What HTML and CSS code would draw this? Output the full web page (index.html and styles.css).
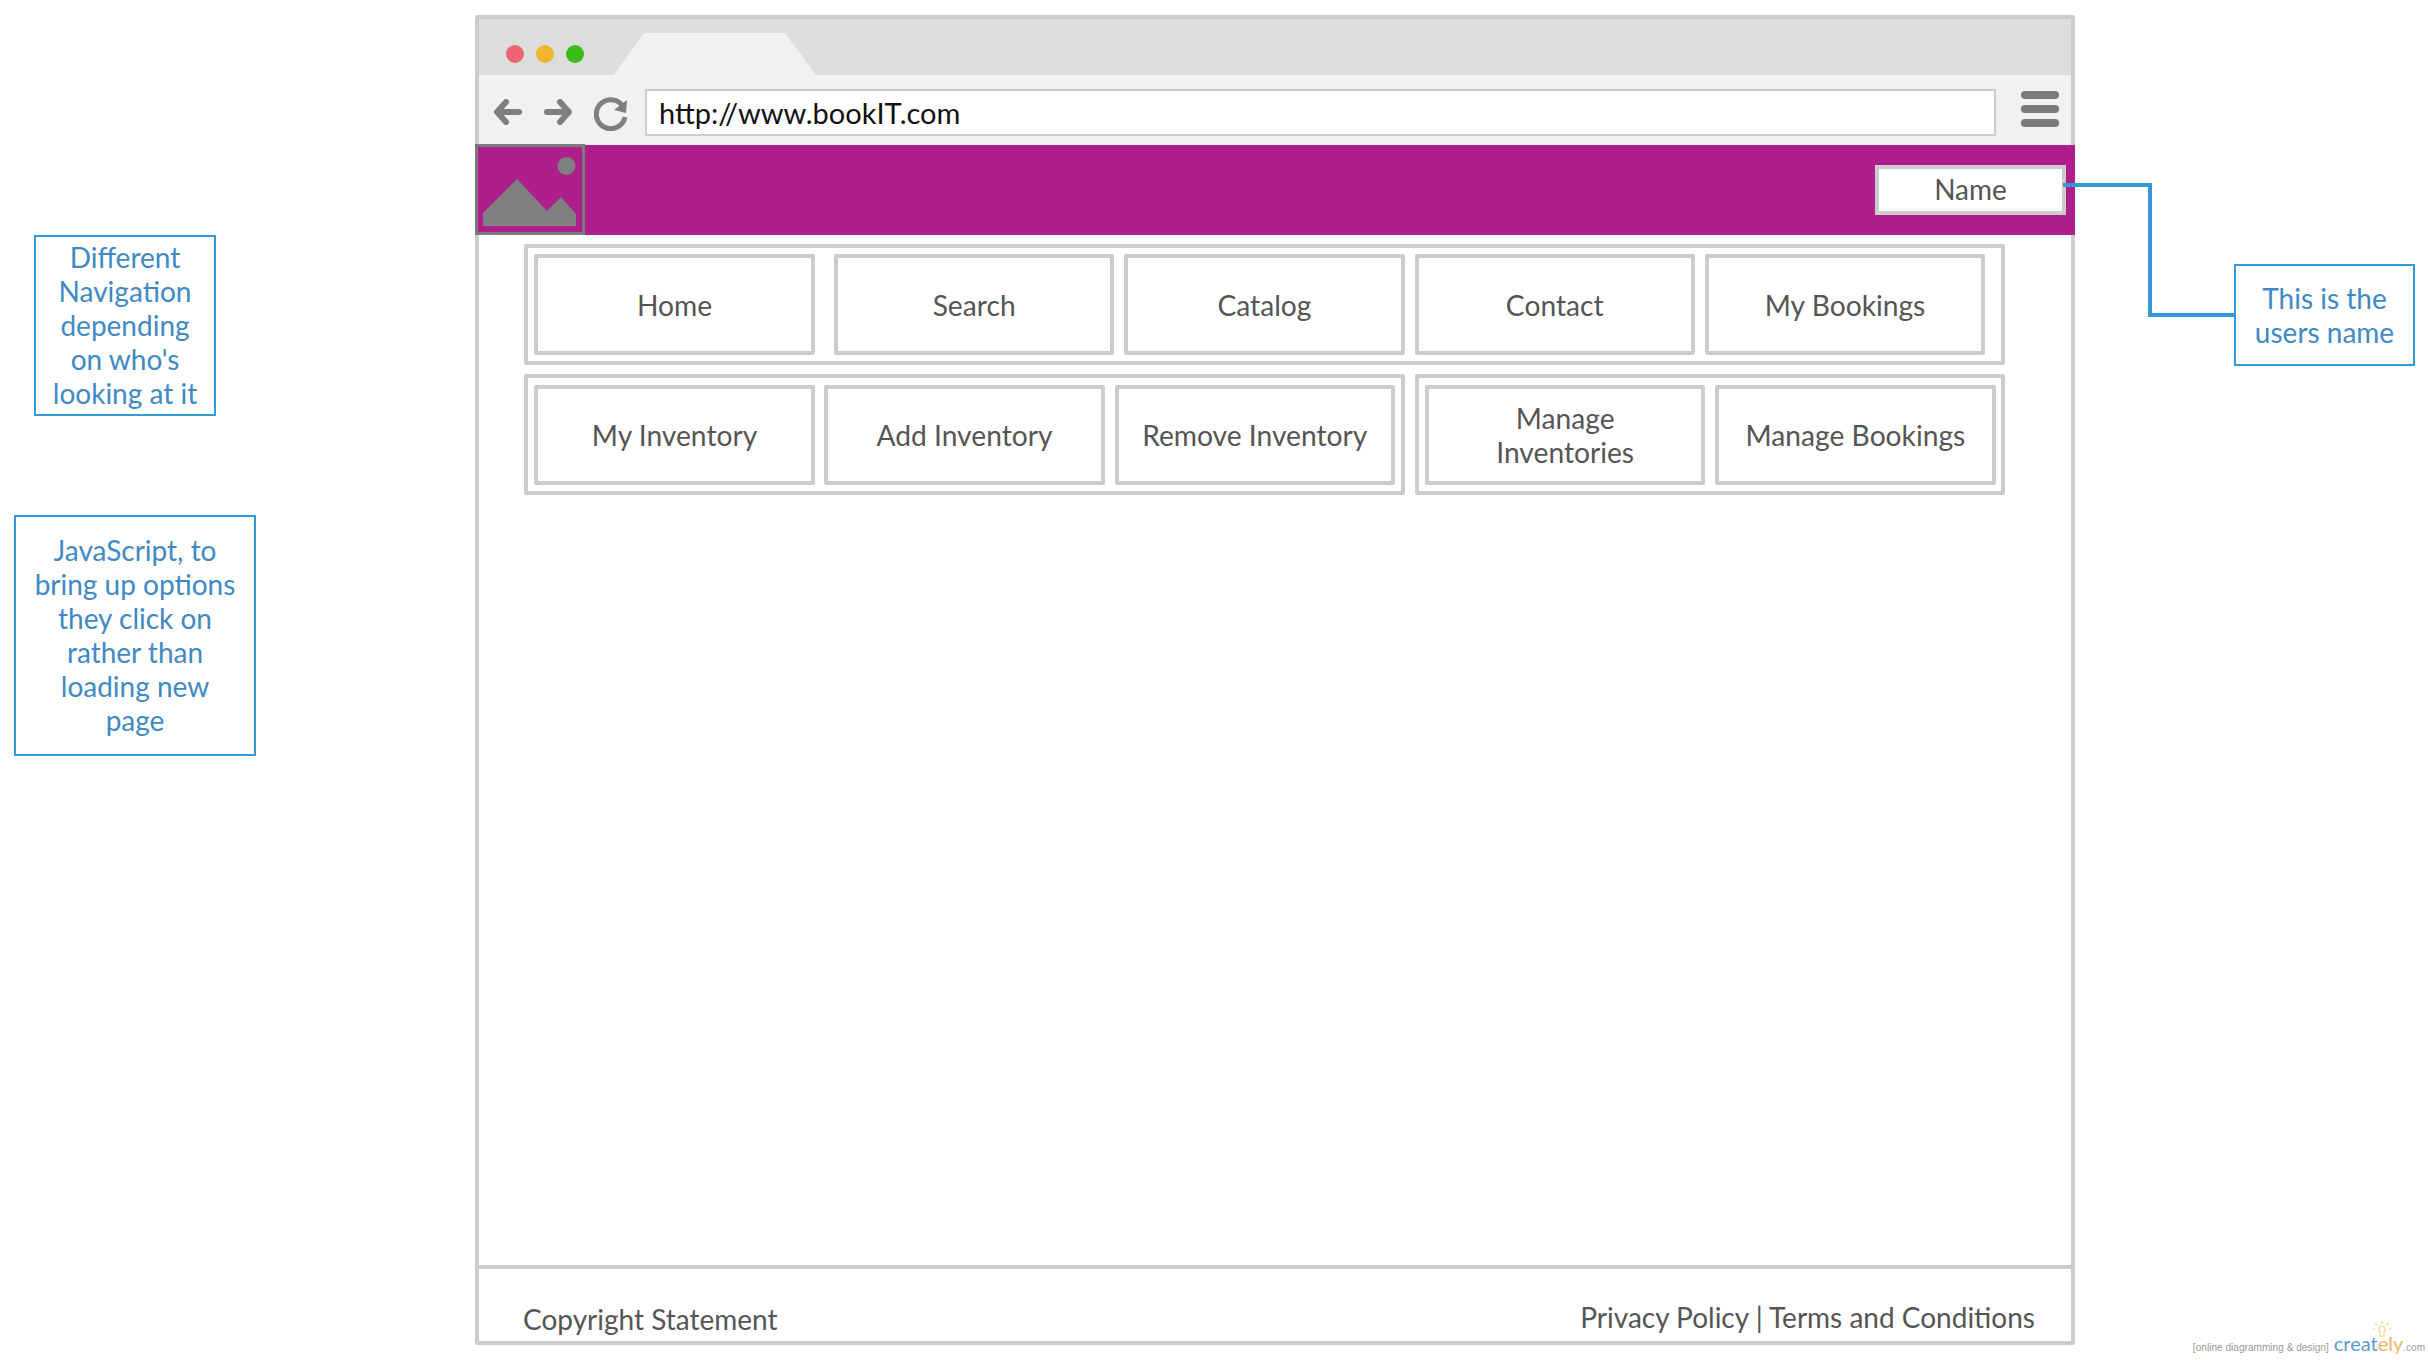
FILE: index.html
```html
<!DOCTYPE html>
<html lang="en">
<head>
  <meta charset="UTF-8" />
  <title>bookIT wireframe</title>
  <link rel="stylesheet" href="styles.css">
</head>
<body>

  <!-- Notes on the left of the diagram -->
  <div class="note note-nav">Different Navigation depending on who's looking at it</div>
  <div class="note note-js">JavaScript, to bring up options they click on rather than loading new page</div>

  <!-- Browser window -->
  <div class="window">
    <div class="tabbar">
      <span class="dot dot-red"></span>
      <span class="dot dot-yellow"></span>
      <span class="dot dot-green"></span>
      <div class="tab"></div>
    </div>

    <div class="toolbar">
      <svg class="icon-arrow" viewBox="0 0 28 26">
        <path d="M12 3 3 13l9 10M4 13h21" fill="none" stroke="#7f7f7f" stroke-width="6" stroke-linecap="round" stroke-linejoin="round"/>
      </svg>
      <svg class="icon-arrow" viewBox="0 0 28 26">
        <path d="M16 3l9 10-9 10M24 13H3" fill="none" stroke="#7f7f7f" stroke-width="6" stroke-linecap="round" stroke-linejoin="round"/>
      </svg>
      <svg class="icon-reload" viewBox="0 0 34 34">
        <path d="M28 8A14.500 14.500 0 1 0 31 20" fill="none" stroke="#7f7f7f" stroke-width="5"/>
        <path d="M33 3 32 16 20 13z" fill="#7f7f7f"/>
      </svg>
      <div class="address">http://www.bookIT.com</div>
      <div class="menu">
        <span></span>
        <span></span>
        <span></span>
      </div>
    </div>

    <header class="header">
      <div class="logo">
        <svg class="logo-img" viewBox="0 0 104 85">
          <circle cx="88.500" cy="19" r="9" fill="#7f7f7f"/>
          <path d="M5 66 39 32 69 64 83 50 98 67V79H5z" fill="#7f7f7f"/>
        </svg>
      </div>
      <div class="name-box">Name</div>
    </header>

    <main class="content">
      <div class="nav-row">
        <a class="nav-item nav-item-first">Home</a>
        <a class="nav-item">Search</a>
        <a class="nav-item">Catalog</a>
        <a class="nav-item">Contact</a>
        <a class="nav-item">My Bookings</a>
      </div>
      <div class="nav-groups">
        <div class="nav-group nav-group-inventory">
          <a class="nav-item nav-item-first-group">My Inventory</a>
          <a class="nav-item">Add Inventory</a>
          <a class="nav-item">Remove Inventory</a>
        </div>
        <div class="nav-group nav-group-manage">
          <a class="nav-item">Manage<br>Inventories</a>
          <a class="nav-item">Manage Bookings</a>
        </div>
      </div>
    </main>

    <footer class="footer">
      <span class="copyright">Copyright Statement</span>
      <span class="legal">Privacy Policy | Terms and Conditions</span>
    </footer>
  </div>

  <!-- Line from the name box to its note -->
  <svg class="connector" width="180" height="140" viewBox="0 0 180 140">
    <path d="M2 2H89V132H176" fill="none" stroke="#3498db" stroke-width="4"/>
  </svg>
  <div class="note note-name">This is the users name</div>

  <!-- Watermark -->
  <div class="watermark">
    <svg class="bulb" viewBox="0 0 18 16">
      <path d="M9 5a3.500 3.500 0 0 0-2 6v4h4v-4a3.500 3.500 0 0 0-2-6zM9 0v3M2 2l2.500 2M16 2l-2.500 2M0 8h2M16 8h2" fill="none" stroke="#f9d488" stroke-width="1.200"/>
    </svg>
    <span class="tagline">[online diagramming &amp; design]</span>
    <span class="brand">creat<span class="brand-ly">ely</span></span>
    <span class="brand-com">.com</span>
  </div>

</body>
</html>
```

FILE: styles.css
```css
body {
  margin: 0;
  width: 2430px;
  height: 1360px;
  position: relative;
  overflow: hidden;
  background-color: #fff;
  font-family: Lato, "Open Sans", sans-serif;
  font-size: 28px;
  line-height: 34px;
  color: #555;
}

/* diagram notes */
.note {
  position: absolute;
  box-sizing: border-box;
  display: flex;
  align-items: center;
  justify-content: center;
  padding: 0 14px 2px;
  border: 2px solid #3498db;
  background-color: #fff;
  color: #4089c4;
  text-align: center;
}

.note-nav {
  left: 34px;
  top: 235px;
  width: 182px;
  height: 181px;
}

.note-js {
  left: 14px;
  top: 515px;
  width: 242px;
  height: 241px;
}

.note-name {
  left: 2234px;
  top: 264px;
  width: 181px;
  height: 102px;
  padding-bottom: 1px;
}

.connector {
  position: absolute;
  left: 2061px;
  top: 183px;
}

/* browser window */
.window {
  position: absolute;
  left: 475px;
  top: 15px;
  box-sizing: border-box;
  width: 1600px;
  height: 1330px;
  display: flex;
  flex-direction: column;
  border: 4px solid #ccc;
  border-radius: 2px;
}

.tabbar {
  height: 56px;
  display: flex;
  align-items: flex-start;
  padding-left: 27px;
  background-color: #dcdedc;
}

.dot {
  width: 18px;
  height: 18px;
  margin: 26px 12px 0 0;
  border-radius: 50%;
}

.dot-red {
  background-color: #ed6472;
}

.dot-yellow {
  background-color: #efb52c;
}

.dot-green {
  background-color: #3cbc18;
}

.tab {
  width: 202px;
  height: 42px;
  margin: 14px 0 0 18px;
  background-color: #f1f1f1;
  clip-path: polygon(30px 0, 171px 0, 100% 100%, 0 100%);
}

.toolbar {
  height: 70px;
  box-sizing: border-box;
  display: flex;
  align-items: center;
  padding: 4px 12px 0 15px;
  background-color: #f1f1f1;
}

.icon-arrow {
  width: 28px;
  height: 26px;
  margin-right: 22px;
}

.icon-reload {
  width: 34px;
  height: 34px;
  margin: 4px 17px 0 0;
}

.address {
  box-sizing: border-box;
  width: 1351px;
  height: 47px;
  margin-right: 25px;
  padding: 5px 12px;
  border: 2px solid #ccc;
  background-color: #fff;
  font-size: 29px;
  color: #111;
}

.menu {
  width: 38px;
  margin-top: -6px;
  display: flex;
  flex-direction: column;
  gap: 6px;
}

.menu span {
  height: 8px;
  border-radius: 4px;
  background-color: #7b7b7b;
}

.header {
  height: 90px;
  margin: 0 -4px;
  display: flex;
  justify-content: space-between;
  align-items: flex-start;
  padding-right: 9px;
  background-color: #ae1f8b;
}

.logo {
  box-sizing: border-box;
  width: 110px;
  height: 91px;
  margin-top: -1px;
  border: 3px solid #7b7b7b;
}

.logo-img {
  display: block;
  width: 104px;
  height: 85px;
}

.name-box {
  box-sizing: border-box;
  width: 191px;
  height: 50px;
  margin-top: 20px;
  padding-top: 3px;
  border: 4px solid #ccc;
  background-color: #fff;
  text-align: center;
}

/* navigation */
.content {
  flex: 1;
  padding: 9px 66px 0 45px;
}

.nav-row,
.nav-group {
  box-sizing: border-box;
  height: 121px;
  display: flex;
  gap: 10px;
  padding: 6px;
  border: 4px solid #ccc;
  border-radius: 2px;
}

.nav-groups {
  display: flex;
  gap: 10px;
  margin-top: 9px;
}

.nav-group {
  padding-top: 7px;
}

.nav-group-inventory {
  width: 881px;
}

.nav-group-manage {
  width: 590px;
}

.nav-item {
  box-sizing: border-box;
  width: 280.3px;
  height: 101px;
  display: flex;
  flex-shrink: 0;
  align-items: center;
  justify-content: center;
  border: 4px solid #ccc;
  border-radius: 2px;
  font-size: 28.2px;
  text-align: center;
}

.nav-group .nav-item {
  height: 100px;
}

.nav-item-first {
  width: 281px;
  margin-right: 9px;
}

.nav-item-first-group {
  width: 281px;
  margin-right: -0.7px;
}

.footer {
  height: 76px;
  box-sizing: border-box;
  display: flex;
  justify-content: space-between;
  align-items: flex-end;
  padding: 0 36px 5px 44px;
  border-top: 4px solid #ccc;
}

.legal {
  margin-bottom: 2px;
}

/* creately mark */
.watermark {
  position: absolute;
  right: 5px;
  bottom: 5px;
  display: flex;
  align-items: baseline;
  font-family: "Liberation Sans", sans-serif;
  color: #999;
}

.tagline {
  margin-right: 5px;
  font-size: 10px;
  line-height: 12px;
  letter-spacing: 0.05px;
}

.brand {
  font-family: Lato, sans-serif;
  font-size: 20px;
  line-height: 24px;
  color: #5b9bd5;
}

.brand-ly {
  color: #f5b36b;
}

.brand-com {
  font-size: 10px;
  line-height: 12px;
}

.bulb {
  position: absolute;
  right: 34px;
  bottom: 18px;
  width: 18px;
  height: 16px;
}
```
